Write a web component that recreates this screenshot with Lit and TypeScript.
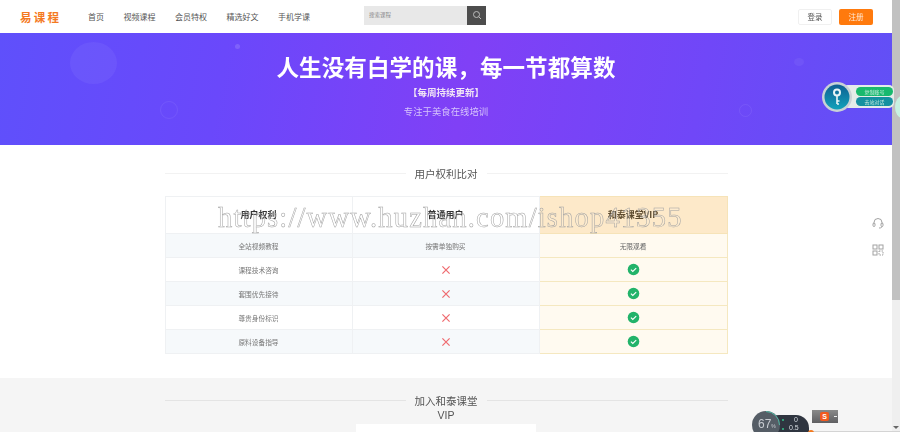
import { LitElement, html, css } from "lit";
import { customElement } from "lit/decorators.js";

const cross = html`<svg class="ic" width="12" height="12" viewBox="0 0 12 12"><path d="M2.4 2.4l7.2 7.2M9.6 2.4l-7.2 7.2" stroke="#ef6a6f" stroke-width="1.2" fill="none"/></svg>`;
const check = html`<svg class="ic" width="13" height="13" viewBox="0 0 13 13"><circle cx="6.5" cy="6.5" r="5.8" fill="#22b36a"/><path d="M3.9 6.6l1.9 1.9 3.4-3.4" stroke="#fff" stroke-width="1.1" fill="none"/></svg>`;

const rows = [
  ["全站视频教程", "按需单独购买", "无限观看"],
  ["课程技术咨询", null, null],
  ["套围优先接待", null, null],
  ["尊贵身份标识", null, null],
  ["原料设备指导", null, null],
];

@customElement("app-root")
export class AppRoot extends LitElement {
  static styles = css`
    :host { display: block; width: 900px; height: 432px; overflow: hidden; position: relative; font-family: "Noto Sans CJK SC", "Liberation Sans", sans-serif; background: #fff; }
    .page { width: 892px; display: flex; flex-direction: column; filter: blur(0.35px); }
    .nav { height: 33px; display: flex; align-items: center; padding: 0 19px 0 20px; background: #fff; }
    .logo { color: #f47a1f; font-size: 11.5px; font-weight: 700; letter-spacing: 2.2px; width: 68px; white-space: nowrap; }
    .links { display: flex; gap: 19.5px; font-size: 8px; color: #555; width: 276px; }
    .search { display: flex; width: 122px; height: 19px; margin-top: -3px; background: #e8e8e8; align-items: center; }
    .search span { flex: 1; font-size: 5.5px; color: #888; padding-left: 5px; }
    .search b { width: 19px; height: 19px; background: #4d4d4d; display: flex; align-items: center; justify-content: center; }
    .auth { margin-left: auto; display: flex; gap: 7px; }
    .auth div { width: 34px; height: 16px; font-size: 7.5px; display: flex; align-items: center; justify-content: center; border-radius: 2px; box-sizing: border-box; }
    .login { border: 1px solid #f0f0f0; color: #555; }
    .reg { background: #ff7a0d; color: #ffe9d6; }
    .hero { height: 112px; background: linear-gradient(100deg, #5f50fb 0%, #6a48fb 25%, #8040f6 52%, #7047f8 78%, #6150f6 100%); color: #fff; display: flex; flex-direction: column; align-items: center; position: relative; overflow: hidden; }
    .hero h1 { margin: 18px 0 0; font-size: 22.5px; line-height: 30px; font-weight: 700; letter-spacing: 0.1px; }
    .hero .sub { margin-top: 4px; font-size: 9.5px; line-height: 14px; font-weight: 700; color: #f0e4f5; }
    .hero .tag { margin-top: 5px; font-size: 9.4px; line-height: 14px; color: #d6c4fb; }
    .blob { position: absolute; border-radius: 50%; }
    .b1 { left: 70px; top: 9px; width: 47px; height: 42px; background: rgba(255,255,255,.05); }
    .b2 { left: 235px; top: 11px; width: 5px; height: 5px; background: rgba(255,255,255,.14); }
    .b3 { left: 160px; top: 68px; width: 16px; height: 16px; border: 1px solid rgba(255,255,255,.07); }
    .b4 { left: 739px; top: 71px; width: 11px; height: 11px; border: 1px solid rgba(255,255,255,.07); }
    .b5 { left: 794px; top: 25px; width: 10px; height: 8px; background: rgba(255,255,255,.05); }
    .main { height: 233px; display: flex; flex-direction: column; align-items: center; background: #fff; }
    .title { width: 563px; display: flex; align-items: center; gap: 9px; font-size: 10.5px; color: #555; margin-top: 20px; height: 17px; }
    .title i { flex: 1; height: 1px; background: #f2f2f2; }
    table { width: 563px; border-collapse: collapse; table-layout: fixed; margin-top: 14px; font-size: 6.7px; line-height: 10px; color: #777; }
    th, td { text-align: center; padding: 0; border: 1px solid #eff1f3; height: 23px; }
    col.c1, col.c2 { width: 187px; }
    th { height: 36px; font-size: 9px; font-weight: 700; color: #333; background: #fff; }
    tr.alt td { background: #f6f9fb; }
    th.vip { background: #fde9c9; border-color: #f6e3b8; color: #5c4a2e; }
    td.vip, tr.alt td.vip { background: #fffaf0; border: 1px solid #f5e8c0; color: #666; }
    .ic { display: block; margin: auto; }
    .band { height: 54px; background: #f5f5f5; display: flex; flex-direction: column; align-items: center; overflow: hidden; }
    .band .t2 { width: 563px; display: flex; align-items: center; gap: 9px; font-size: 10.5px; color: #555; margin-top: 15px; height: 16px; }
    .band .t2 i { flex: 1; height: 1px; background: #e4e4e4; }
    .band .vip-l { font-size: 10.5px; line-height: 13px; color: #555; margin-top: 1px; font-family: "Liberation Sans", sans-serif; }
    .band .card { width: 180px; height: 10px; background: #fff; margin-top: 2px; }
    .wm { position: absolute; left: 218px; top: 200px; font-family: "Liberation Serif", serif; font-size: 28.5px; line-height: 36px; letter-spacing: 1.18px; white-space: nowrap; color: rgba(255,255,255,.1); -webkit-text-stroke: 0.5px #a2a2a2; }
    .bar { position: absolute; right: 0; top: 0; bottom: 0; width: 8px; background: #efefef; }
    .bar div { height: 300px; background: #c1c1c1; }
    .bar svg { position: absolute; bottom: 2px; left: 1px; }
    .line { position: absolute; left: 810px; right: 0; bottom: 0; height: 1px; background: #d4d4d4; }
    .mint { position: absolute; left: 895px; top: 96px; width: 14px; height: 22px; border-radius: 50%; background: #c8f2e2; }
    .key { position: absolute; left: 821px; top: 81px; width: 74px; height: 32px; }
    .key svg { display: block; }
    .key span { position: absolute; left: 35px; width: 37px; height: 9px; border-radius: 4.5px; font-size: 5px; line-height: 9px; text-align: center; color: #cfeee2; }
    .key .k1 { top: 6px; background: #18b96e; }
    .key .k2 { top: 16px; background: #1590a0; }
    .side { position: absolute; left: 872px; top: 217px; display: flex; flex-direction: column; gap: 15px; opacity: .8; }
    .meter { position: absolute; left: 752px; top: 411px; width: 60px; height: 21px; overflow: hidden; }
    .meter svg { display: block; }
    .meter .num { position: absolute; left: 6px; top: 6px; font-size: 12px; line-height: 15px; color: #c8ccd2; font-family: "Liberation Sans", sans-serif; white-space: nowrap; }
    .meter .num small { font-size: 5px; }
    .meter .v { position: absolute; font-size: 7px; line-height: 8px; color: #d8dde2; font-family: "Liberation Sans", sans-serif; }
    .meter .v1 { left: 42px; top: 5px; }
    .meter .v2 { left: 37px; top: 13px; }
    .sogou { position: absolute; left: 812px; top: 410px; width: 26px; height: 13px; background: linear-gradient(#8a8a8a, #5f5f62); display: flex; align-items: center; gap: 5px; padding-left: 8px; box-sizing: border-box; }
    .sogou b { width: 9px; height: 9px; background: #f2591e; border-radius: 2px; color: #fff; font-size: 7px; line-height: 9px; text-align: center; font-family: "Liberation Sans", sans-serif; }
    .sogou i { width: 3px; height: 1px; background: #eee; }
    .dot { position: absolute; left: 808px; top: 430px; width: 6px; height: 6px; border-radius: 50%; background: #f2791e; }
  `;

  render() {
    return html`
      <div class="page">
        <div class="nav">
          <div class="logo">易课程</div>
          <div class="links"><span>首页</span><span>视频课程</span><span>会员特权</span><span>精选好文</span><span>手机学课</span></div>
          <div class="search"><span>搜索课程</span><b><svg width="10" height="10" viewBox="0 0 10 10" fill="none" stroke="#bbb" stroke-width="1"><circle cx="4.5" cy="4.5" r="3"/><path d="M6.8 6.8L9 9"/></svg></b></div>
          <div class="auth"><div class="login">登录</div><div class="reg">注册</div></div>
        </div>
        <div class="hero">
          <div class="blob b1"></div><div class="blob b2"></div><div class="blob b3"></div><div class="blob b4"></div><div class="blob b5"></div>
          <h1>人生没有白学的课，每一节都算数</h1>
          <div class="sub">【每周持续更新】</div>
          <div class="tag">专注于美食在线培训</div>
        </div>
        <div class="main">
          <div class="title"><i></i><span>用户权利比对</span><i></i></div>
          <table>
            <colgroup><col class="c1" /><col class="c2" /><col /></colgroup>
            <tr><th>用户权利</th><th>普通用户</th><th class="vip">和泰课堂VIP</th></tr>
            ${rows.map((r, i) => html`<tr class=${i % 2 === 0 ? "alt" : ""}><td>${r[0]}</td><td>${r[1] ?? cross}</td><td class="vip">${r[2] ?? check}</td></tr>`)}
          </table>
        </div>
        <div class="band">
          <div class="t2"><i></i><span>加入和泰课堂</span><i></i></div>
          <div class="vip-l">VIP</div>
          <div class="card"></div>
        </div>
      </div>
      <div class="wm">https://www.huzhan.com/ishop41355</div>
      <div class="bar"><div></div><svg width="6" height="5" viewBox="0 0 6 5"><path d="M0 1h6L3 4z" fill="#666"/></svg></div>
      <div class="line"></div>
      <div class="mint"></div>
      <div class="key">
        <svg width="74" height="32" viewBox="0 0 74 32">
          <defs><linearGradient id="kg" x1="0" y1="0" x2="0" y2="1"><stop offset="0" stop-color="#0f5f92"/><stop offset="1" stop-color="#12a2bb"/></linearGradient></defs>
          <rect x="22" y="4" width="51" height="23" rx="5" fill="#e4ece9"/>
          <circle cx="16" cy="16" r="15" fill="#c9d2d6"/>
          <circle cx="16" cy="16" r="12.5" fill="url(#kg)"/>
          <circle cx="16" cy="11.5" r="3" fill="none" stroke="#e8f4f6" stroke-width="2"/>
          <path d="M16 14v9M16 20h2.5M16 23h2" stroke="#e8f4f6" stroke-width="1.6" fill="none"/>
        </svg>
        <span class="k1">复制账号</span><span class="k2">去站对话</span>
      </div>
      <div class="side">
        <svg width="12" height="12" viewBox="0 0 12 12" fill="none" stroke="#8a8a8a" stroke-width="1"><path d="M2 7V5.5a4 4 0 018 0V7"/><rect x="1" y="6" width="2" height="3.5" rx="1"/><rect x="9" y="6" width="2" height="3.5" rx="1"/><path d="M10 9.5c0 1-1 1.5-3 1.5"/></svg>
        <svg width="12" height="12" viewBox="0 0 12 12" fill="none" stroke="#8a8a8a" stroke-width="1"><rect x="1" y="1" width="4" height="4"/><rect x="7" y="1" width="4" height="4"/><rect x="1" y="7" width="4" height="4"/><path d="M7 7h4v4H7z" stroke-dasharray="1.5 1"/></svg>
      </div>
      <div class="meter">
        <svg width="60" height="32" viewBox="0 0 60 32">
          <rect x="14" y="4" width="43" height="30" rx="13" fill="#2f3540"/>
          <circle cx="14" cy="14" r="14" fill="#555d66"/>
          <path d="M14 .5A13.5 13.5 0 0127.5 14" fill="none" stroke="#4fb6a2" stroke-width="1"/>
          <circle cx="31" cy="9" r="1" fill="#35c08a"/><circle cx="31" cy="18" r="1" fill="#35c08a"/>
        </svg>
        <span class="num">67<small>%</small></span>
        <span class="v v1">0</span>
        <span class="v v2">0.5</span>
      </div>
      <div class="sogou"><b>S</b><i></i></div>
      <div class="dot"></div>
    `;
  }
}
